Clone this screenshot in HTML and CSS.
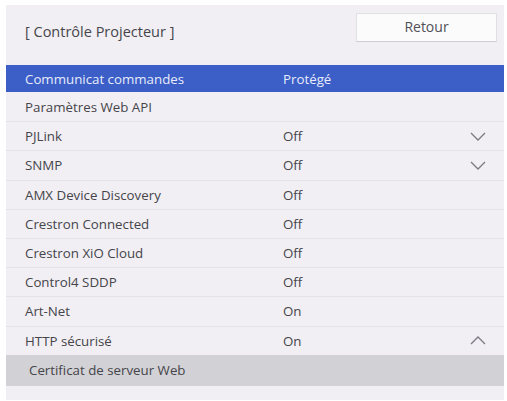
FILE: index.html
```html
<!DOCTYPE html>
<html lang="fr">
<head>
<meta charset="utf-8">
<title>Contrôle Projecteur</title>
<link rel="stylesheet" href="styles.css">
</head>
<body>
<div class="panel">
  <div class="header">
    <div class="title">[ Contrôle Projecteur ]</div>
    <div class="btn">Retour</div>
  </div>
  <div class="list">
    <div class="row selected"><span class="label">Communicat commandes</span><span class="value">Protégé</span><span class="icon"></span></div>
    <div class="row"><span class="label">Paramètres Web API</span><span class="value"></span><span class="icon"></span></div>
    <div class="row"><span class="label">PJLink</span><span class="value">Off</span><span class="icon"><svg viewBox="0 0 16 9" width="16" height="9"><path d="M1 1 L8 8 L15 1" fill="none" stroke="#7a7a80" stroke-width="1.3"/></svg></span></div>
    <div class="row"><span class="label">SNMP</span><span class="value">Off</span><span class="icon"><svg viewBox="0 0 16 9" width="16" height="9"><path d="M1 1 L8 8 L15 1" fill="none" stroke="#7a7a80" stroke-width="1.3"/></svg></span></div>
    <div class="row"><span class="label">AMX Device Discovery</span><span class="value">Off</span><span class="icon"></span></div>
    <div class="row"><span class="label">Crestron Connected</span><span class="value">Off</span><span class="icon"></span></div>
    <div class="row"><span class="label">Crestron XiO Cloud</span><span class="value">Off</span><span class="icon"></span></div>
    <div class="row"><span class="label">Control4 SDDP</span><span class="value">Off</span><span class="icon"></span></div>
    <div class="row"><span class="label">Art-Net</span><span class="value">On</span><span class="icon"></span></div>
    <div class="row open"><span class="label">HTTP sécurisé</span><span class="value">On</span><span class="icon"><svg viewBox="0 0 16 9" width="16" height="9"><path d="M1 8 L8 1 L15 8" fill="none" stroke="#7a7a80" stroke-width="1.3"/></svg></span></div>
    <div class="row sub"><span class="label">Certificat de serveur Web</span></div>
  </div>
</div>
</body>
</html>
```
FILE: styles.css
```css
html, body {
  margin: 0;
  padding: 0;
  background: #ffffff;
}
body {
  font-family: "Open Sans", "Noto Sans", sans-serif;
  color: #45454b;
}
.panel {
  margin: 5px 3px 0 6px;
  width: 498px;
  height: 395px;
  background: #f1eff3;
  box-sizing: border-box;
}
.header {
  height: 60px;
  display: flex;
  align-items: flex-start;
  justify-content: space-between;
  padding: 8px 7px 0 19px;
  box-sizing: border-box;
}
.title {
  font-size: 14.5px;
  margin-top: 9px;
}
.btn {
  width: 141px;
  height: 29px;
  box-sizing: border-box;
  background: #fbfbfc;
  border: 1px solid #e0dfe4;
  border-bottom-color: #cfcdd3;
  font-size: 14px;
  color: #505056;
  display: flex;
  align-items: center;
  justify-content: center;
  padding-bottom: 3px;
}
.list {
  display: flex;
  flex-direction: column;
}
.row {
  display: grid;
  grid-template-columns: 258px 1fr 34px;
  align-items: center;
  height: 29.2px;
  padding-left: 19px;
  border-top: 1px solid #e4e2e7;
  font-size: 13.3px;
  box-sizing: border-box;
}
.row.selected {
  height: 27px;
  background: #3b5ec7;
  color: #e8ecfa;
  border-top: none;
}
.row.selected + .row {
  border-top: none;
}
.row.sub {
  height: 31px;
  background: #d2d1d5;
  border-top: none;
  padding-left: 23px;
  display: flex;
}
.icon {
  display: flex;
  justify-content: flex-start;
  align-items: center;
}
.icon svg {
  display: block;
}
```
